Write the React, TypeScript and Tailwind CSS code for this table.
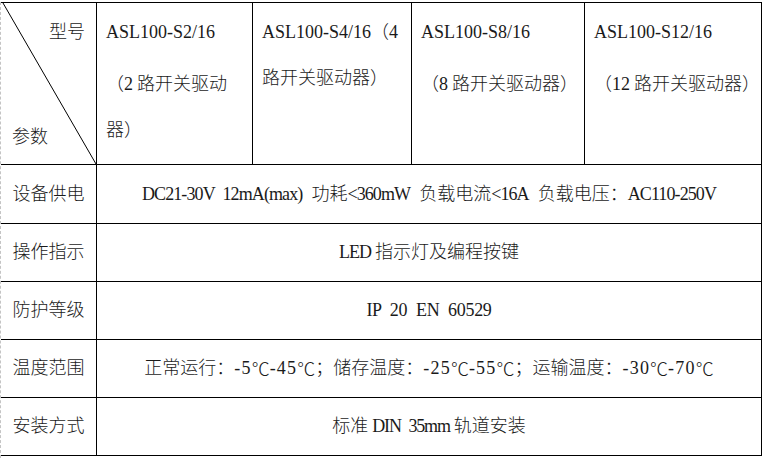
import React from 'react'

// Latin falls to Liberation Serif (SimSun-ish widths), CJK to Noto Sans CJK SC
const FONT = "font-['Liberation_Serif','Noto_Sans_CJK_SC',serif]"

// "~" = Word's autospace between Latin and CJK, "|" = a half-width space before CJK,
// ℃ is forced to the CJK font so it stays full width
function Mix({ text, track = 0 }: { text: string; track?: number }) {
  const parts = text.split(/(~|\||℃|[\x20-\x7b\x7d]+)/).filter(Boolean)
  return (
    <>
      {parts.map((p, i) => {
        if (p === '~') return <span key={i} className="inline-block w-[4px]" />
        if (p === '|') return <span key={i} className="inline-block w-[9px]" />
        if (p === '℃') return <span key={i} className="font-['Noto_Sans_CJK_SC',sans-serif]">℃</span>
        if (/^[\x20-\x7b\x7d]+$/.test(p)) return <span key={i} style={{ letterSpacing: `${track}px` }}>{p}</span>
        return <span key={i}>{p}</span>
      })}
    </>
  )
}

const HEADERS: string[][][] = [
  [['ASL100-S2/16'], ['（2~路开关驱动', '器）']],
  [['ASL100-S4/16（4', '路开关驱动器）']],
  [['ASL100-S8/16'], ['（8~路开关驱动器）']],
  [['ASL100-S12/16'], ['（12~路开关驱动器）']],
]

const ROWS: { label: string; value: string; track: number }[] = [
  { label: '设备供电', value: 'DC21-30V 12mA(max)|功耗<360mW|负载电流<16A|负载电压：AC110-250V', track: -0.9 },
  { label: '操作指示', value: 'LED~指示灯及编程按键', track: -1 },
  { label: '防护等级', value: 'IP 20 EN 60529', track: -0.3 },
  { label: '温度范围', value: '正常运行：-5℃-45℃；储存温度：-25℃-55℃；运输温度：-30℃-70℃', track: 1.2 },
  { label: '安装方式', value: '标准~DIN 35mm~轨道安装', track: -1.2 },
]

export default function App() {
  return (
    <div className={`w-[765px] h-[458px] bg-white pt-[2px] overflow-hidden text-[18px] font-light text-[#1a1a1a] ${FONT} [word-spacing:4.5px]`}>
      <div className="w-[762px] h-full border-l border-dashed border-[#c4c4c4]">
        <div className="grid grid-cols-[96px_156px_159px_173px_177px] grid-rows-[162px_59px_58px_58px_58px_58px] border-t border-black">

          {/* corner cell with diagonal */}
          <div className="relative flex flex-col justify-between border-r border-b border-black pt-[6px] pb-[4px] px-[11px] leading-[46px] whitespace-nowrap">
            <svg className="absolute inset-0" width="95" height="161" viewBox="0 0 95 161">
              <line x1="2" y1="0" x2="95" y2="161" stroke="#000" strokeWidth="1" />
            </svg>
            <span className="self-end">型号</span>
            <span className="self-start">参数</span>
          </div>

          {HEADERS.map((paras, i) => (
            <div key={i} className="border-r border-b border-black pt-[6px] pl-[9px] leading-[46px] whitespace-nowrap">
              {paras.map((lines, j) => (
                <div key={j} className={j > 0 ? 'mt-[6px]' : ''}>
                  {lines.map((l, k) => (
                    <div key={k}><Mix text={l} /></div>
                  ))}
                </div>
              ))}
            </div>
          ))}

          {ROWS.map(r => (
            <React.Fragment key={r.label}>
              <div className="flex items-center justify-center border-r border-b border-black whitespace-nowrap">
                {r.label}
              </div>
              <div className="col-span-4 flex items-center justify-center border-r border-b border-black whitespace-nowrap">
                <Mix text={r.value} track={r.track} />
              </div>
            </React.Fragment>
          ))}
        </div>
      </div>
    </div>
  )
}
